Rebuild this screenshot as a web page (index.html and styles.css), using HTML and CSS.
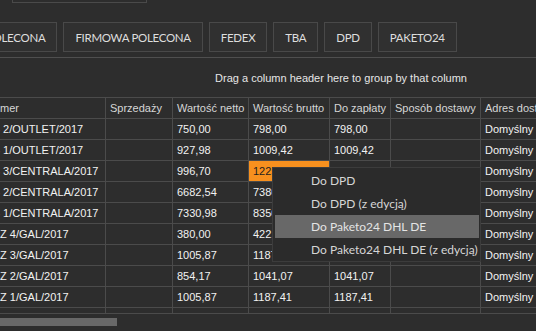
FILE: index.html
```html
<!DOCTYPE html>
<html lang="pl">
<head>
    <meta charset="utf-8"/>
    <link rel="stylesheet" href="styles.css">
</head>
<body>
<div class="search"></div>

<div class="toolbar">
    <button class="btn">POLECONA</button>
    <button class="btn">FIRMOWA POLECONA</button>
    <button class="btn">FEDEX</button>
    <button class="btn">TBA</button>
    <button class="btn">DPD</button>
    <button class="btn">PAKETO24</button>
</div>

<div class="group_panel">Drag a column header here to group by that column</div>

<div class="grid_wrap">
    <table class="grid">
        <colgroup>
            <col class="c_numer">
            <col class="c_sprz">
            <col class="c_netto">
            <col class="c_brutto">
            <col class="c_zapl">
            <col class="c_sposob">
            <col class="c_adres">
        </colgroup>
        <thead>
        <tr>
            <th>Numer</th>
            <th>Sprzedaży</th>
            <th>Wartość netto</th>
            <th>Wartość brutto</th>
            <th>Do zapłaty</th>
            <th>Sposób dostawy</th>
            <th>Adres dostawy</th>
        </tr>
        </thead>
        <tbody>
        <tr><td>FS 2/OUTLET/2017</td><td></td><td>750,00</td><td>798,00</td><td>798,00</td><td></td><td>Domyślny</td></tr>
        <tr><td>FS 1/OUTLET/2017</td><td></td><td>927,98</td><td>1009,42</td><td>1009,42</td><td></td><td>Domyślny</td></tr>
        <tr><td>FS 3/CENTRALA/2017</td><td></td><td>996,70</td><td class="selected">1225,94</td><td>1225,94</td><td></td><td>Domyślny</td></tr>
        <tr><td>FS 2/CENTRALA/2017</td><td></td><td>6682,54</td><td>7380,72</td><td>7380,72</td><td></td><td>Domyślny</td></tr>
        <tr><td>FS 1/CENTRALA/2017</td><td></td><td>7330,98</td><td>8350,11</td><td>8350,11</td><td></td><td>Domyślny</td></tr>
        <tr><td>FSZ 4/GAL/2017</td><td></td><td>380,00</td><td>422,40</td><td>422,40</td><td></td><td>Domyślny</td></tr>
        <tr><td>FSZ 3/GAL/2017</td><td></td><td>1005,87</td><td>1187,41</td><td>1187,41</td><td></td><td>Domyślny</td></tr>
        <tr><td>FSZ 2/GAL/2017</td><td></td><td>854,17</td><td>1041,07</td><td>1041,07</td><td></td><td>Domyślny</td></tr>
        <tr><td>FSZ 1/GAL/2017</td><td></td><td>1005,87</td><td>1187,41</td><td>1187,41</td><td></td><td>Domyślny</td></tr>
        <tr class="new_row"><td></td><td></td><td></td><td></td><td></td><td></td><td></td></tr>
        </tbody>
    </table>
</div>

<div class="hscroll">
    <div class="hscroll_thumb"></div>
</div>

<ul class="context_menu">
    <li>Do DPD</li>
    <li>Do DPD (z edycją)</li>
    <li class="hover">Do Paketo24 DHL DE</li>
    <li>Do Paketo24 DHL DE (z edycją)</li>
</ul>
</body>
</html>
```

FILE: styles.css
```css
body {
    margin: 0;
    width: 536px;
    height: 331px;
    overflow: hidden;
    position: relative;
    background: #2d2d2d;
    color: #e8e8e8;
    font-family: "Liberation Sans", Arial, sans-serif;
    font-size: 11px;
}

.search {
    width: 133px;
    height: 2px;
    margin-left: 12px;
    border: 1px solid #4a4a4a;
    border-top: 0;
}

.toolbar {
    display: flex;
    gap: 6px;
    margin: 19px 0 0 -26px;
    height: 30px;
}

.btn {
    height: 30px;
    padding: 0 11px;
    background: #303030;
    border: 1px solid #494949;
    border-radius: 0;
    color: #dedede;
    font-family: Lato, "Noto Sans", sans-serif;
    font-size: 11.5px;
    letter-spacing: -0.3px;
    white-space: nowrap;
}

.group_panel {
    margin-top: 5px;
    height: 40px;
    border-top: 1px solid #4f4f4f;
    display: flex;
    align-items: center;
    justify-content: flex-end;
    padding: 0 69px 0 0;
    box-sizing: border-box;
    color: #e6e6e6;
}

.grid_wrap {
    margin-left: -19px;
}

.grid {
    border-collapse: collapse;
    table-layout: fixed;
    width: 599px;
}

.c_numer { width: 124px; }
.c_sprz { width: 67px; }
.c_netto { width: 76px; }
.c_brutto { width: 81px; }
.c_zapl { width: 61px; }
.c_sposob { width: 90px; }
.c_adres { width: 100px; }

.grid th,
.grid td {
    border: 1px solid #4b4b4b;
    height: 19px;
    padding: 1px 4px 0;
    text-align: left;
    white-space: nowrap;
    overflow: hidden;
    line-height: 19px;
}

.grid th {
    font-weight: normal;
    color: #d6d6d6;
}

.grid td {
    color: #f2f2f2;
}

.grid td.selected {
    background: #f7901e;
    color: #1e1e1e;
}

.grid .new_row td {
    height: 5px;
    padding: 0;
    line-height: 5px;
}

.hscroll {
    height: 16px;
    padding-top: 4px;
    box-sizing: border-box;
}

.hscroll_thumb {
    width: 117px;
    height: 8px;
    background: #686868;
}

.context_menu {
    position: absolute;
    left: 272px;
    top: 167px;
    width: 204px;
    margin: 0;
    padding: 1px 1px 0 2px;
    list-style: none;
    background: #2b2b2b;
    border: 1px solid #3c3c3c;
    font-family: Lato, "Noto Sans", sans-serif;
    font-size: 12px;
    color: #d6d6d6;
}

.context_menu li {
    height: 23px;
    line-height: 23px;
    padding-left: 36px;
    white-space: nowrap;
}

.context_menu li.hover {
    background: #686868;
    color: #e4e4e4;
}
```
